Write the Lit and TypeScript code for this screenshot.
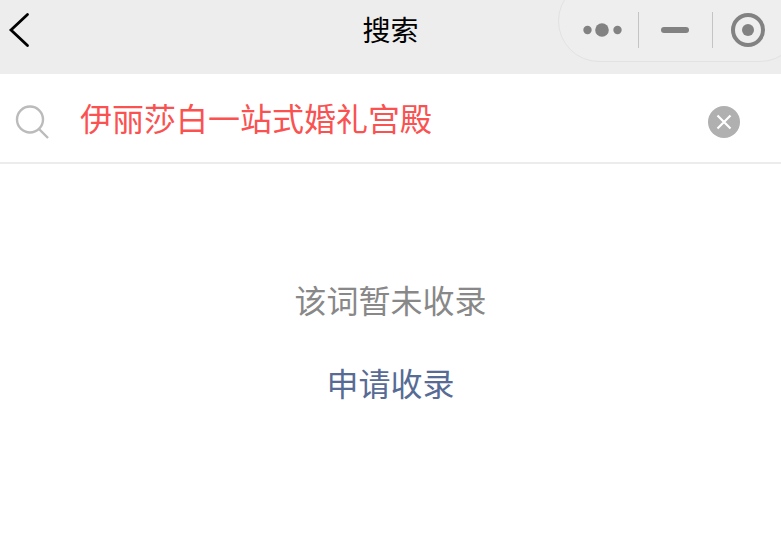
import { LitElement, css, html } from 'lit'
import { customElement } from 'lit/decorators.js'

@customElement('app-root')
export class AppRoot extends LitElement {
  static styles = css`
    :host {
      display: block;
      min-height: 533px;
      background: #fff;
      font-family: "Noto Sans CJK SC", "Liberation Sans", sans-serif;
    }

    .nav {
      height: 74px;
      background: #ededed;
      display: grid;
      grid-template-columns: 1fr auto 1fr;
      overflow: hidden;
    }

    .back {
      display: block;
      margin: 12px 0 0 8px;
    }

    .title {
      font-size: 28px;
      line-height: 58px;
      color: #000;
    }

    .capsule {
      justify-self: end;
      box-sizing: border-box;
      width: 243px;
      height: 82px;
      margin: -20px -20px 0 0;
      padding-top: 18px;
      border: 1px solid #e2e2e2;
      border-radius: 41px;
      background: #eeeeee;
      display: flex;
      align-items: center;
    }

    .capsule svg {
      display: block;
    }

    .more {
      margin-left: 24px;
    }

    .minus {
      margin-left: 22px;
    }

    .target {
      margin-left: 17px;
    }

    .sep {
      width: 1px;
      height: 36px;
      background: #c4c4c4;
      margin-left: 15px;
    }

    .sep + .minus + .sep {
      margin-left: 23px;
    }

    .search {
      box-sizing: border-box;
      height: 90px;
      border-bottom: 2px solid #ececec;
      display: flex;
      align-items: center;
      padding: 0 41px 0 15px;
    }

    .glass {
      display: block;
      margin-top: 7px;
    }

    .search-text {
      flex: 1;
      margin-left: 31px;
      font-size: 32px;
      line-height: 44px;
      color: #fa5151;
      margin-top: -2px;
    }

    .clear {
      display: block;
      margin-top: 8px;
    }

    .empty {
      display: flex;
      flex-direction: column;
      align-items: center;
      padding-top: 113px;
      font-size: 32px;
      line-height: 44px;
    }

    .empty-text {
      color: #888888;
    }

    .apply {
      margin-top: 39px;
      color: #576b95;
    }
  `

  render() {
    return html`
      <div class="nav">
        <div>
          <svg class="back" width="24" height="36" viewBox="0 0 24 36" fill="none">
            <path d="M19.5 2.5 L3 18 L19.5 33.5" stroke="#000" stroke-width="2.8" stroke-linecap="round" stroke-linejoin="miter" />
          </svg>
        </div>
        <div class="title">搜索</div>
        <div class="capsule">
          <svg class="more" width="40" height="16" viewBox="0 0 40 16">
            <circle cx="4.5" cy="8" r="4.2" fill="#828282" />
            <circle cx="19" cy="8" r="6.8" fill="#828282" />
            <circle cx="34.5" cy="8" r="4.2" fill="#828282" />
          </svg>
          <div class="sep"></div>
          <svg class="minus" width="28" height="8" viewBox="0 0 28 8">
            <rect x="0" y="1" width="28" height="6" rx="3" fill="#828282" />
          </svg>
          <div class="sep"></div>
          <svg class="target" width="36" height="36" viewBox="0 0 36 36" fill="none">
            <circle cx="18" cy="18" r="15" stroke="#828282" stroke-width="4" />
            <circle cx="18" cy="18" r="6" fill="#828282" />
          </svg>
        </div>
      </div>
      <div class="search">
        <svg class="glass" width="34" height="36" viewBox="0 0 34 36" fill="none">
          <circle cx="15" cy="15.5" r="13" stroke="#bbbbbb" stroke-width="2.4" />
          <path d="M24.5 25.5 L33 34" stroke="#bbbbbb" stroke-width="2.4" />
        </svg>
        <div class="search-text">伊丽莎白一站式婚礼宫殿</div>
        <svg class="clear" width="32" height="32" viewBox="0 0 32 32" fill="none">
          <circle cx="16" cy="16" r="16" fill="#b0b0b0" />
          <path d="M9.5 9.5 L22.5 22.5 M22.5 9.5 L9.5 22.5" stroke="#fff" stroke-width="2.2" />
        </svg>
      </div>
      <div class="empty">
        <div class="empty-text">该词暂未收录</div>
        <div class="apply">申请收录</div>
      </div>
    `
  }
}
